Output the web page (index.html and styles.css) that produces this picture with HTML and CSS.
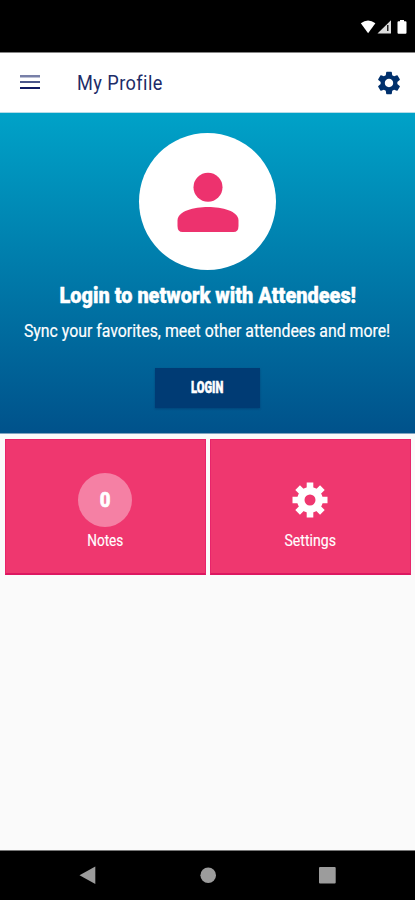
FILE: index.html
```html
<!DOCTYPE html>
<html lang="en">
<head>
<meta charset="utf-8">
<title>My Profile</title>
<link rel="stylesheet" href="styles.css">
</head>
<body>
<div class="status">
  <svg width="48" height="16" viewBox="0 0 48 16">
    <path fill="#fff" d="M0.8 3.2Q8-2.400 15.400 3.200L8.100 13.300Z"/>
    <path fill="#ddd" d="M17.500 13.500L31 0.200V13.500Z"/>
    <path fill="#222" d="M27 5h1.500v6H27z"/>
    <path fill="#fff" d="M38.500 1.200h1.500V0h4v1.200h1.500q1 0 1 1v10.600q0 1-1 1h-7q-1 0-1-1V2.200q0-1 1-1z"/>
  </svg>
</div>
<header class="bar">
  <svg class="menu" width="20" height="16" viewBox="0 0 20 16">
    <path fill="#7880a8" d="M0 0h20v2.500H0z"/>
    <path fill="#4c578c" d="M0 6h20v2H0z"/>
    <path fill="#111b63" d="M0 12h20v2H0z"/>
  </svg>
  <h1><span class="fit title">My Profile</span></h1>
  <svg class="gear" width="28" height="28" viewBox="0 0 24 24"><path fill="#00306c" d="M19.140 12.940c.04-.3.060-.61.060-.94 0-.32-.02-.64-.07-.94l2.030-1.580c.18-.14.230-.41.120-.61l-1.920-3.320c-.12-.22-.37-.29-.59-.22l-2.390.96c-.5-.38-1.030-.7-1.620-.94l-.36-2.540c-.04-.24-.24-.41-.48-.41h-3.840c-.24 0-.43.170-.47.410l-.36 2.540c-.59.240-1.130.570-1.620.940l-2.390-.96c-.22-.08-.47 0-.59.220L2.740 8.870c-.12.210-.08.470.120.610l2.030 1.580c-.05.300-.09.630-.09.940s.02.640.070.940l-2.030 1.580c-.18.140-.23.410-.12.610l1.920 3.320c.12.220.37.290.59.220l2.390-.96c.5.380 1.030.700 1.620.940l.36 2.540c.05.240.240.410.480.410h3.840c.24 0 .44-.17.470-.41l.36-2.540c.59-.24 1.130-.56 1.620-.94l2.390.96c.22.080.470 0 .59-.22l1.920-3.320c.12-.22.070-.47-.12-.61l-2.010-1.580zM12 15.600c-1.980 0-3.600-1.620-3.600-3.600s1.620-3.600 3.600-3.600 3.600 1.620 3.600 3.600-1.620 3.600-3.600 3.600z"/></svg>
</header>
<section class="hero">
  <div class="avatar">
    <svg width="62" height="62" viewBox="0 0 62 62" fill="#ed326e">
      <circle cx="31" cy="16.300" r="14.500"/>
      <path d="M.5 49.500C.5 40 17 36 31 36S61.500 40 61.500 49.500V55q0 6-5 6H5.500q-5 0-5-6z"/>
    </svg>
  </div>
  <h2><span class="fit heading">Login to network with Attendees!</span></h2>
  <p><span class="fit sub">Sync your favorites, meet other attendees and more!</span></p>
  <button type="button"><span class="fit login">LOGIN</span></button>
</section>
<main class="cards">
  <div class="card">
    <div class="count"><span class="fit zero">0</span></div>
    <div class="label"><span class="fit notes">Notes</span></div>
  </div>
  <div class="card">
    <div class="icon">
      <svg width="36" height="36" viewBox="-18 -18 36 36">
        <g fill="#fff">
          <path id="tooth" d="M-3.300-17.500h6.600v6h-6.600zM-3.300 17.500h6.600v-6h-6.600z"/>
          <use href="#tooth" transform="rotate(45)"/><use href="#tooth" transform="rotate(90)"/><use href="#tooth" transform="rotate(135)"/>
        </g>
        <circle r="9.200" fill="none" stroke="#fff" stroke-width="7.400"/>
      </svg>
    </div>
    <div class="label"><span class="fit settings">Settings</span></div>
  </div>
</main>
<nav class="nav">
  <svg width="415" height="49" viewBox="0 0 415 49" fill="#9c9c9c">
    <path d="M79.500 24.200L95.300 15.500V33z"/>
    <circle cx="208.200" cy="24.200" r="7.800"/>
    <rect x="319" y="16" width="16.700" height="16.500" rx="1"/>
  </svg>
</nav>
</body>
</html>
```
FILE: styles.css
```css
* { box-sizing: border-box; }
body {
  margin: 0;
  width: 415px;
  height: 900px;
  display: flex;
  flex-direction: column;
  overflow: hidden;
  background: #fafafa;
  color: #fff;
  font-family: Roboto, "Liberation Sans", sans-serif;
}
h1, h2, p { margin: 0; font-weight: 400; }
svg { display: block; }
.fit { display: inline-block; white-space: nowrap; }
.status {
  height: 52px;
  flex: none;
  background: #000;
  padding: 20px 7px 0 0;
  display: flex;
  justify-content: flex-end;
}
.bar {
  height: 61px;
  flex: none;
  background: #fff;
  border-top: 1px solid #858585;
  border-bottom: 1px solid #b5dce8;
  display: flex;
  align-items: center;
  padding: 0 12px 0 20px;
  color: #1d2c68;
}
.bar h1 { flex: 1; margin-left: 37px; font-size: 21px; line-height: 28px; }
.title { letter-spacing: .5px; transform-origin: left; transform: scaleX(.865); }
.hero {
  height: 321px;
  flex: none;
  background: linear-gradient(#00a2c8, #00528b);
  border-bottom: 1px solid #7fa3c0;
  display: flex;
  flex-direction: column;
  align-items: center;
  padding-top: 20px;
}
.avatar {
  width: 137px;
  height: 137px;
  flex: none;
  border-radius: 50%;
  background: #fff;
  display: flex;
  align-items: center;
  justify-content: center;
}
.hero h2 { margin-top: 12px; height: 28px; line-height: 28px; font-size: 22px; font-weight: 900; }
.heading { -webkit-text-stroke: .4px #fff; transform: scaleX(.905); }
.hero p { margin-top: 9px; height: 24px; line-height: 24px; font-size: 18px; }
.sub { -webkit-text-stroke: .2px #fff; transform: scaleX(.88); }
button {
  margin-top: 25px;
  width: 105px;
  height: 40px;
  border: 0;
  padding: 0;
  background: #003b74;
  color: #fff;
  font: 900 16px/40px Roboto, sans-serif;
  box-shadow: 0 1px 2px rgba(0, 40, 90, .4);
}
.login { -webkit-text-stroke: .5px #fff; transform: scaleX(.7); }
.cards {
  display: grid;
  grid-template-columns: 1fr 1fr;
  gap: 4px;
  padding: 5px 4.500px 0 5px;
  flex: 1;
  align-content: start;
}
.card {
  height: 136px;
  background: #ef376f;
  border: 1px solid #e8246a;
  border-bottom: 2px solid #dc1760;
  display: flex;
  flex-direction: column;
  align-items: center;
  padding-top: 33px;
}
.count, .icon {
  width: 54px;
  height: 54px;
  display: flex;
  align-items: center;
  justify-content: center;
}
.count { border-radius: 50%; background: #f580a4; font-size: 21px; font-weight: 900; }
.label { height: 24px; line-height: 24px; font-size: 16px; margin-top: 1.500px; }
.zero { -webkit-text-stroke: .6px #fff; transform: scaleX(.88); }
.notes, .settings { -webkit-text-stroke: .15px #fff; transform: scaleX(.88); }
.notes { transform: scaleX(.85); }
.nav { height: 50px; flex: none; background: #000; border-top: 1px solid #777; }
```
